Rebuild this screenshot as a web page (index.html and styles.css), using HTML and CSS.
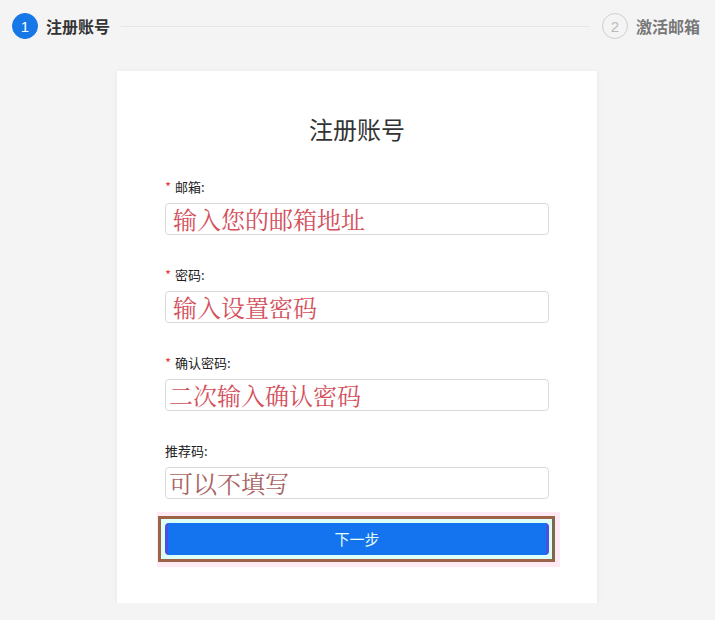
FILE: index.html
```html
<!DOCTYPE html>
<html lang="zh-CN">
<head>
<meta charset="utf-8">
<title>注册账号</title>
<link rel="stylesheet" href="styles.css">
</head>
<body>
<div class="steps">
  <div class="step active">
    <span class="num">1</span>
    <span class="step-title">注册账号</span>
  </div>
  <div class="step-line"></div>
  <div class="step">
    <span class="num">2</span>
    <span class="step-title">激活邮箱</span>
  </div>
</div>

<div class="card">
  <h1 class="card-title">注册账号</h1>
  <form class="form">
    <div class="field">
      <label class="label"><span class="req">*</span>邮箱:</label>
      <input class="input" type="text" placeholder="输入您的邮箱地址">
    </div>
    <div class="field">
      <label class="label"><span class="req">*</span>密码:</label>
      <input class="input" type="password" placeholder="输入设置密码">
    </div>
    <div class="field">
      <label class="label"><span class="req">*</span>确认密码:</label>
      <input class="input shift" type="password" placeholder="二次输入确认密码">
    </div>
    <div class="field field-last">
      <label class="label">推荐码:</label>
      <input class="input muted shift" type="text" placeholder="可以不填写">
    </div>
    <div class="btn-outer">
      <div class="btn-frame">
        <button class="btn" type="button">下一步</button>
      </div>
    </div>
  </form>
</div>
</body>
</html>
```

FILE: styles.css
```css
* { box-sizing: border-box; }

body {
  margin: 0;
  background: #f4f4f4;
  font-family: "Noto Sans CJK SC", "Noto Sans", sans-serif;
  color: #333;
}

.steps {
  display: flex;
  align-items: center;
  padding: 13px 15px 0 12px;
  height: 39px;
}

.step {
  display: flex;
  align-items: center;
  gap: 8px;
}

.num {
  width: 26px;
  height: 26px;
  border-radius: 50%;
  border: 1px solid #cfcfcf;
  color: #bbb;
  display: flex;
  align-items: center;
  justify-content: center;
  font-family: "Liberation Sans", sans-serif;
  font-size: 15px;
  line-height: 1;
}

.step.active .num {
  background: #1677e6;
  border-color: #1677e6;
  color: #fff;
}

.step-title {
  font-size: 16px;
  font-weight: 700;
  color: #777;
  line-height: 22px;
}

.step.active .step-title { color: #333; }

.step-line {
  flex: 1;
  height: 1px;
  background: #e6e6e6;
  margin: 0 12px 0 11px;
}

.card {
  width: 480px;
  margin: 32px 0 0 117px;
  background: #fff;
  box-shadow: 0 1px 6px rgba(0, 0, 0, 0.06);
  padding: 42px 48px 36px;
}

.card-title {
  margin: 0 0 33px;
  text-align: center;
  font-size: 24px;
  font-weight: 400;
  line-height: 32px;
  color: #333;
}

.form {
  display: flex;
  flex-direction: column;
}

.field {
  display: flex;
  flex-direction: column;
  gap: 8px;
  margin-bottom: 31px;
}

.field.field-last { margin-bottom: 13px; }

.label {
  font-size: 13px;
  line-height: 17px;
  color: #222;
}

.req {
  color: #e0403a;
  margin-right: 4px;
}

.input {
  width: 384px;
  height: 32px;
  border: 1px solid #d9d9d9;
  border-radius: 4px;
  padding: 0 7px 2px;
  font-family: "Noto Serif CJK SC", "Liberation Serif", serif;
  font-size: 24px;
  background: #fff;
  outline: none;
}

.input::placeholder {
  color: #d4505c;
  opacity: 1;
}

.input.shift { padding-left: 3px; }

.input.muted::placeholder { color: #a86464; }

.btn-outer {
  background: #fdeaf5;
  padding: 4px 5px 5px 1px;
  margin-left: -8px;
  width: 403px;
}

.btn-frame {
  border: 3px solid #9e6248;
  border-right-color: #7a6a45;
  background: #dcfff8;
  padding: 4px;
  width: 397px;
}

.btn {
  display: block;
  width: 384px;
  height: 32px;
  border: none;
  border-left: 3px solid #4b50e2;
  border-right: 3px solid #4b50e2;
  border-radius: 4px;
  background: #1473ef;
  color: #e6fff9;
  font-family: "Noto Sans CJK SC", sans-serif;
  font-size: 15px;
  line-height: 32px;
  padding: 0;
  cursor: pointer;
}
```
